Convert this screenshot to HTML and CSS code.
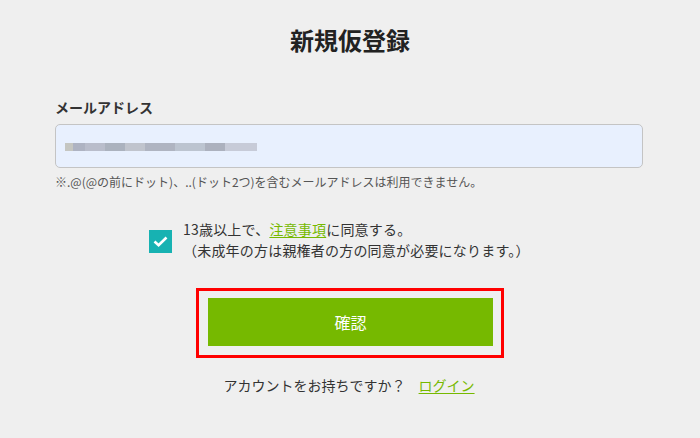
FILE: index.html
```html
<!DOCTYPE html>
<html lang="ja">
<head>
<meta charset="utf-8">
<link rel="stylesheet" href="styles.css">
</head>
<body>
<main class="page">
  <h1 class="title">新規仮登録</h1>
  <form class="form">
    <label class="label">メールアドレス</label>
    <div class="input"><span class="blur"></span></div>
    <p class="note">※.@(@の前にドット)、..(ドット2つ)を含むメールアドレスは利用できません。</p>
    <div class="agree">
      <span class="check"><svg width="15" height="11" viewBox="0 0 15 11"><path d="M1.5 5.5 L5.6 9.2 L13.5 1.5" fill="none" stroke="#fff" stroke-width="2.6"/></svg></span>
      <div class="agree-text">
        <div>13歳以上で、<a class="link" href="#">注意事項</a>に同意する。</div>
        <div>（未成年の方は親権者の方の同意が必要になります。）</div>
      </div>
    </div>
    <div class="btn-wrap">
      <div class="btn-outline"><button type="button" class="btn">確認</button></div>
    </div>
    <p class="login">アカウントをお持ちですか？ <a class="link" href="#">ログイン</a></p>
  </form>
</main>
</body>
</html>
```
FILE: styles.css
```css
* { box-sizing: border-box; }
html, body { margin: 0; padding: 0; }
body {
  background: #efefef;
  font-family: "Noto Sans CJK JP", "Noto Sans", sans-serif;
  color: #333;
  width: 700px;
  height: 438px;
  overflow: hidden;
}
.page { padding-top: 23px; }
.title {
  margin: 0;
  text-align: center;
  font-size: 24px;
  line-height: 34px;
  font-weight: 700;
  color: #222;
}
.form {
  width: 588px;
  margin: 0 0 0 55px;
  padding-top: 40px;
}
.label {
  display: block;
  font-size: 14px;
  font-weight: 700;
  line-height: 20px;
  color: #333;
  margin-bottom: 7px;
}
.input {
  height: 44px;
  background: #e8f0fe;
  border: 1px solid #c4c4c4;
  border-radius: 5px;
  display: flex;
  align-items: center;
  padding-left: 9px;
}
.blur {
  display: block;
  width: 192px;
  height: 8px;
  margin-top: 2px;
  background: linear-gradient(90deg, #c2c2bb 0 8px, #a8adbc 8px 20px, #b5b8c6 20px 40px, #a5acb8 40px 60px, #bcc0c8 60px 80px, #a9aebb 80px 110px, #b8c0cc 110px 140px, #a6abb8 140px 160px, #c4c8d4 160px 192px);
  filter: blur(0.6px);
  opacity: 0.9;
}
.note {
  margin: 6px 0 0;
  font-size: 12px;
  line-height: 16px;
  color: #555;
}
.agree {
  display: flex;
  align-items: center;
  margin-top: 29px;
  padding-left: 94px;
  gap: 11px;
}
.check {
  width: 23px;
  height: 23px;
  background: #17b2b2;
  display: flex;
  align-items: center;
  justify-content: center;
  margin-top: 3px;
}
.agree-text {
  font-size: 14px;
  line-height: 21px;
  color: #333;
  letter-spacing: 0.2px;
}
.link {
  color: #76b900;
  text-decoration: underline;
  text-underline-offset: 2px;
}
.btn-wrap {
  display: flex;
  justify-content: center;
  margin-top: 27px;
  padding-left: 2px;
}
.btn-outline {
  width: 308px;
  height: 70px;
  border: 3px solid #f00;
  padding: 7px 9px 0;
}
.btn {
  display: block;
  width: 285px;
  height: 48px;
  border: 0;
  background: #76b900;
  color: #fff;
  font-family: inherit;
  font-size: 16px;
  cursor: pointer;
}
.login {
  margin: 17px 0 0;
  text-align: center;
  font-size: 14px;
  line-height: 20px;
  color: #333;
}
.login .link { margin-left: 10px; }
```
